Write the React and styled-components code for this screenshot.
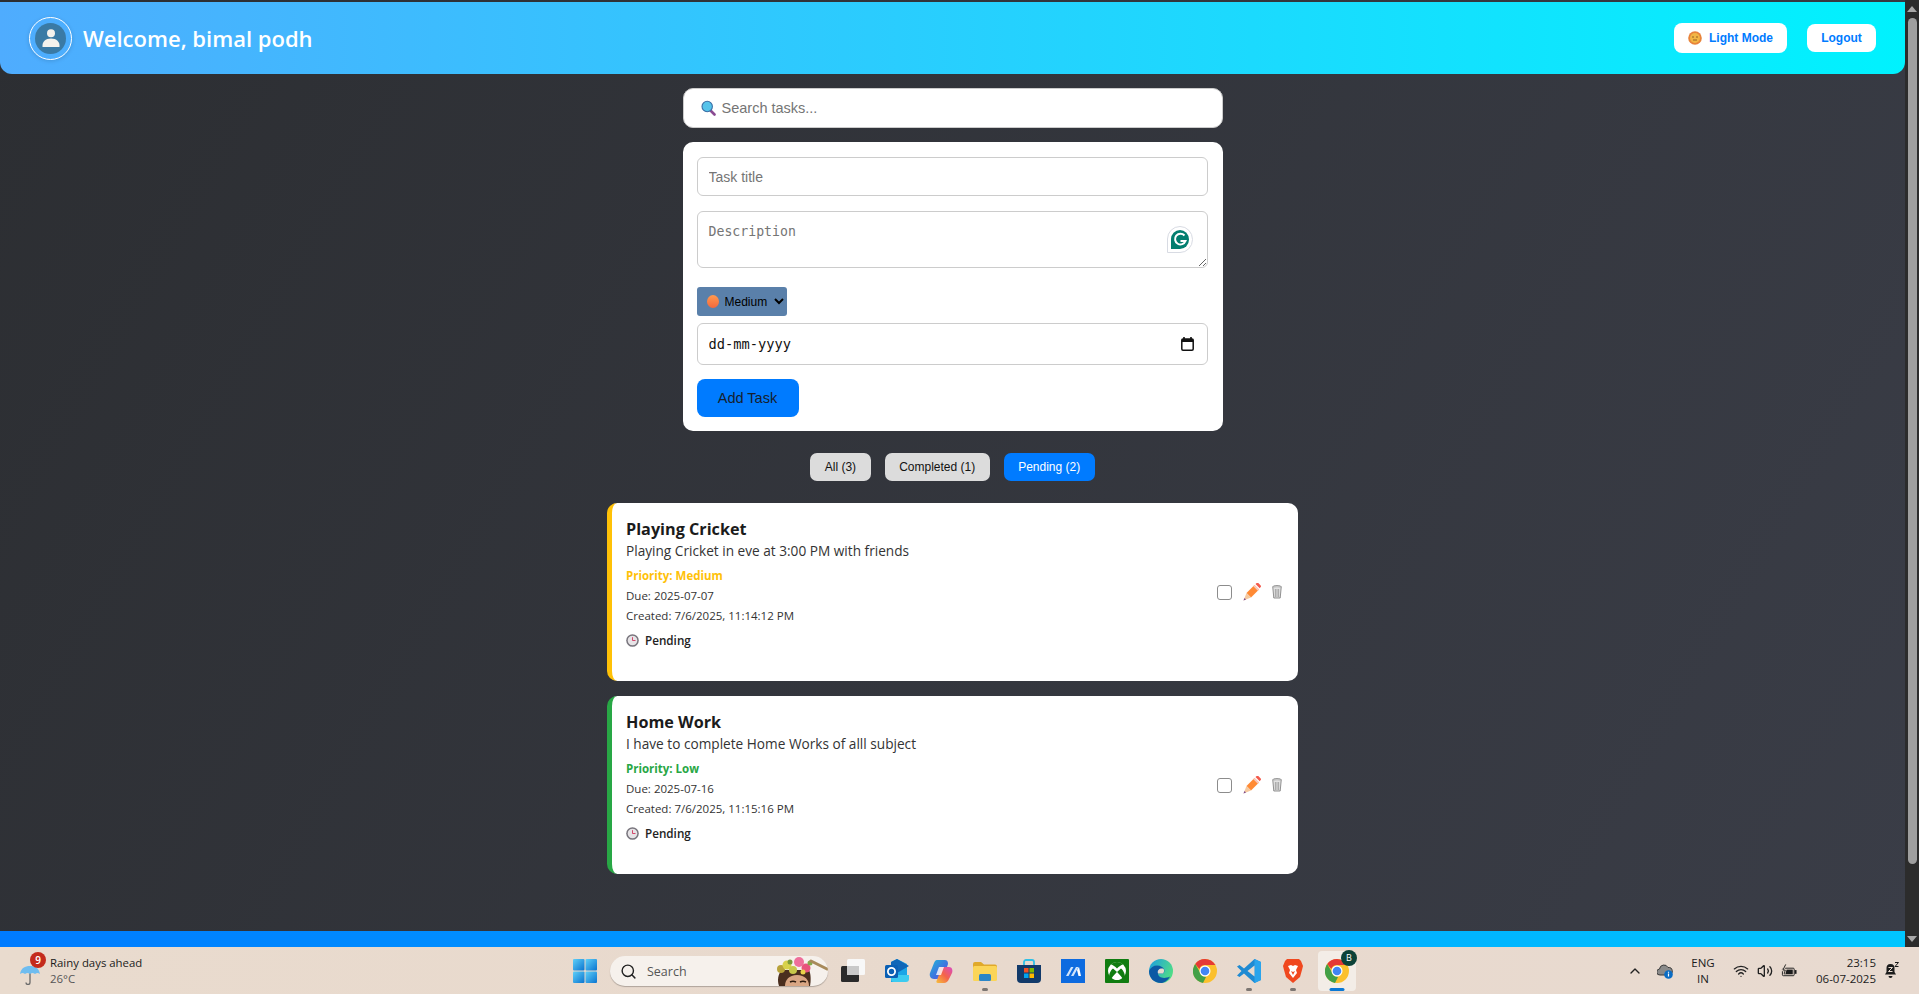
import React from "react";
import styled, { createGlobalStyle } from "styled-components";
import { ChevronUp, Search as SearchGlyph, Wifi, Volume2 } from "lucide-react";

const GlobalStyle = createGlobalStyle`
  html, body { margin: 0; padding: 0; height: 100%; overflow: hidden; }
  * { box-sizing: border-box; }
  body { font-family: "Liberation Sans", Arial, sans-serif; }
`;

const Screen = styled.div`
  display: flex;
  flex-direction: column;
  height: 100vh;
`;

const Viewport = styled.div`
  flex: 1;
  min-height: 0;
  display: flex;
`;

const Page = styled.div`
  flex: 1;
  min-width: 0;
  display: flex;
  flex-direction: column;
  padding-top: 2px;
  background: linear-gradient(120deg, #2c2e32 0%, #3a3d47 100%);
`;

const Header = styled.header`
  height: 72px;
  flex: none;
  display: flex;
  align-items: center;
  justify-content: space-between;
  padding: 0 29px;
  border-radius: 0 0 12px 12px;
  background: linear-gradient(90deg, #4facfe 0%, #00f2fe 100%);
`;

const UserBlock = styled.div`
  display: flex;
  align-items: center;
  gap: 11px;
`;

const Avatar = styled.div`
  width: 43px;
  height: 43px;
  border-radius: 50%;
  border: 1.5px solid #fff;
  display: flex;
  align-items: center;
  justify-content: center;
  box-shadow: 0 1px 4px rgba(0, 0, 0, 0.15);
`;

const AvatarInner = styled.div`
  width: 31px;
  height: 31px;
  border-radius: 50%;
  background: #3a7aa5;
  display: flex;
  align-items: center;
  justify-content: center;
`;

const Welcome = styled.h1`
  margin: 0;
  font-family: "Open Sans", sans-serif;
  font-size: 22px;
  font-weight: 600;
  color: #fff;
`;

const HeaderActions = styled.div`
  display: flex;
  align-items: center;
  gap: 20px;
`;

const HeaderButton = styled.button`
  display: flex;
  align-items: center;
  justify-content: center;
  gap: 7px;
  width: ${(p) => p.$w}px;
  height: ${(p) => p.$h}px;
  border: none;
  border-radius: 8px;
  background: #fff;
  color: #007bff;
  font-family: "Liberation Sans", sans-serif;
  font-size: 12px;
  font-weight: 700;
`;

const Main = styled.main`
  flex: 1;
  min-height: 0;
  display: flex;
  flex-direction: column;
  align-items: center;
  padding-top: 14px;
`;

const SearchBox = styled.label`
  width: 540px;
  height: 40px;
  flex: none;
  display: flex;
  align-items: center;
  gap: 6px;
  padding: 0 17px;
  background: #fff;
  border: 1px solid #ccc;
  border-radius: 10px;
`;

const SearchInput = styled.input`
  flex: 1;
  border: none;
  outline: none;
  padding: 0;
  font-family: "Liberation Sans", sans-serif;
  font-size: 14.5px;
  &::placeholder { color: #757575; }
`;

const FormCard = styled.form`
  width: 540px;
  height: 289px;
  flex: none;
  margin-top: 14px;
  padding: 15px 15px 15px 14px;
  background: #fff;
  border-radius: 10px;
  display: flex;
  flex-direction: column;
  align-items: flex-start;
`;

const TitleInput = styled.input`
  width: 100%;
  height: 39px;
  flex: none;
  padding: 0 11px;
  border: 1px solid #ccc;
  border-radius: 6px;
  font-family: "Liberation Sans", sans-serif;
  font-size: 14px;
  &::placeholder { color: #757575; }
`;

const TextareaWrap = styled.div`
  position: relative;
  width: 100%;
  height: 57px;
  flex: none;
  margin-top: 15px;
`;

const Description = styled.textarea`
  display: block;
  width: 100%;
  height: 100%;
  padding: 12px 11px;
  border: 1px solid #ccc;
  border-radius: 6px;
  font-family: "DejaVu Sans Mono", monospace;
  font-size: 13.2px;
  line-height: 16px;
  &::placeholder { color: #757575; }
`;

const GrammarlyBadge = styled.div`
  position: absolute;
  right: 15px;
  top: 15px;
  width: 26px;
  height: 27px;
`;

const SelectWrap = styled.div`
  position: relative;
  width: 90px;
  height: 29px;
  flex: none;
  margin-top: 19px;
`;

const PrioritySelect = styled.select`
  width: 100%;
  height: 100%;
  padding: 0 0 0 24px;
  border: none;
  border-radius: 3px;
  background: #5a80aa;
  color: #000;
  font-family: "Liberation Sans", sans-serif;
  font-size: 12px;
`;

const SelectDot = styled.span`
  position: absolute;
  left: 10px;
  top: 8px;
  width: 12px;
  height: 13px;
  border-radius: 50%;
  background: linear-gradient(180deg, #ff9a50, #f4683c);
  pointer-events: none;
`;

const DateBox = styled.label`
  width: 100%;
  height: 42px;
  flex: none;
  margin-top: 7px;
  padding: 0 13px 0 11px;
  display: flex;
  align-items: center;
  border: 1px solid #ccc;
  border-radius: 6px;
  background: #fff;
`;

const DateField = styled.input`
  flex: 1;
  min-width: 0;
  border: none;
  outline: none;
  padding: 0;
  font-family: "DejaVu Sans Mono", monospace;
  font-size: 13.7px;
  &::placeholder { color: #111; opacity: 1; }
`;

const AddButton = styled.button`
  width: 102px;
  height: 38px;
  flex: none;
  margin-top: 14px;
  border: none;
  border-radius: 8px;
  background: #007bff;
  color: #16202e;
  font-family: "Liberation Sans", sans-serif;
  font-size: 14.5px;
`;

const Filters = styled.div`
  display: flex;
  gap: 14px;
  flex: none;
  margin-top: 22px;
`;

const FilterButton = styled.button`
  height: 28px;
  padding: 0 14.5px;
  border: none;
  border-radius: 7px;
  background: ${(p) => (p.$active ? "#007bff" : "#dcdcdc")};
  color: ${(p) => (p.$active ? "#fff" : "#111")};
  font-family: "Liberation Sans", sans-serif;
  font-size: 12px;
`;

const TaskList = styled.div`
  display: flex;
  flex-direction: column;
  gap: 15px;
  width: 691px;
  flex: none;
  margin-top: 22px;
`;

const TaskCard = styled.article`
  height: 178px;
  display: flex;
  align-items: center;
  justify-content: space-between;
  padding: 0 16px 0 14px;
  background: #fff;
  border-left: 5px solid ${(p) => p.$color};
  border-radius: 10px;
`;

const TaskBody = styled.div`
  display: flex;
  flex-direction: column;
  align-self: flex-start;
  padding-top: 14px;
  font-family: "Open Sans", sans-serif;
  color: #222;
`;

const TaskTitle = styled.h3`
  margin: 0;
  font-size: 16.2px;
  line-height: 24px;
  font-weight: 700;
  color: #1b1b1b;
`;

const TaskDesc = styled.p`
  margin: 0;
  font-size: 13.65px;
  line-height: 19px;
  color: #333;
`;

const TaskPriority = styled.div`
  margin-top: 8px;
  font-size: 11.5px;
  line-height: 16px;
  font-weight: 700;
  color: ${(p) => p.$color};
`;

const TaskMeta = styled.div`
  margin-top: 4px;
  font-size: 11.5px;
  line-height: 16px;
  color: #333;
`;

const TaskStatus = styled.div`
  display: flex;
  align-items: center;
  gap: 6px;
  margin-top: 8px;
  font-size: 11.7px;
  line-height: 16px;
  font-weight: 600;
  color: #222;
`;

const TaskActions = styled.div`
  display: flex;
  align-items: center;
  gap: 11px;
`;

const TaskCheck = styled.input`
  width: 15px;
  height: 15px;
  margin: 0;
  appearance: none;
  background: #fff;
  border: 1.5px solid #8c8c8c;
  border-radius: 3px;
`;

const BottomBar = styled.div`
  height: 16px;
  flex: none;
  background: linear-gradient(90deg, #007bff 0%, #00c6ff 100%);
`;

const Scrollbar = styled.div`
  width: 14px;
  flex: none;
  display: flex;
  flex-direction: column;
  align-items: center;
  justify-content: space-between;
  padding: 6px 0 5px;
  background: #2c2c2c;
`;

const ScrollThumb = styled.div`
  width: 9px;
  flex: 1;
  margin: 6px 0 72px;
  border-radius: 5px;
  background: #9f9f9f;
`;

const Taskbar = styled.footer`
  height: 47px;
  flex: none;
  display: flex;
  align-items: center;
  background: linear-gradient(90deg, #e9dbce 0%, #e8d9cd 50%, #e8dad0 100%);
  font-family: "Open Sans", sans-serif;
  color: #1c1c1c;
`;

const WeatherArea = styled.div`
  width: 563px;
  flex: none;
  display: flex;
  align-items: center;
  gap: 10px;
  padding-left: 20px;
`;

const WeatherIcon = styled.div`
  position: relative;
  width: 20px;
  height: 20px;
  margin-top: 8px;
`;

const WeatherBadge = styled.span`
  position: absolute;
  left: 10px;
  top: -13px;
  width: 16px;
  height: 16px;
  border-radius: 50%;
  background: #c42b1c;
  color: #fff;
  font-size: 10px;
  font-weight: 600;
  line-height: 16px;
  text-align: center;
`;

const WeatherText = styled.div`
  display: flex;
  flex-direction: column;
  font-size: 11.4px;
  line-height: 16px;
`;

const WeatherTemp = styled.span`
  color: #555;
`;

const CenterIcons = styled.div`
  display: flex;
  align-items: center;
`;

const TaskSearch = styled.div`
  width: 218px;
  height: 30px;
  margin: 1px 3px 0;
  padding: 0 0 0 10px;
  display: flex;
  align-items: center;
  gap: 10px;
  border-radius: 15px;
  background: #f6f1ec;
  box-shadow: 0 1px 1px rgba(0, 0, 0, 0.25);
  font-size: 12.5px;
  color: #555;
  overflow: hidden;
`;

const TaskPhoto = styled.div`
  margin-left: auto;
  width: 52px;
  height: 30px;
`;

const TaskButton = styled.div`
  position: relative;
  width: 44px;
  height: 44px;
  display: flex;
  align-items: center;
  justify-content: center;
`;

const ActiveTile = styled.div`
  position: absolute;
  left: 3px;
  top: 2px;
  width: 38px;
  height: 40px;
  border-radius: 4px;
  background: #f3ede7;
`;

const RunDot = styled.span`
  position: absolute;
  bottom: 2px;
  left: 50%;
  transform: translateX(-50%);
  width: ${(p) => (p.$active ? 15 : 6)}px;
  height: 3px;
  border-radius: 2px;
  background: ${(p) => (p.$active ? "#0a78d4" : "#7c7672")};
`;

const ProfileBadge = styled.span`
  position: absolute;
  right: 2px;
  top: 1px;
  width: 16px;
  height: 16px;
  border-radius: 50%;
  background: #0c4238;
  color: #fff;
  font-size: 9px;
  line-height: 16px;
  text-align: center;
`;

const ChromeLayer = styled.div`
  position: relative;
  display: flex;
`;

const Tray = styled.div`
  margin-left: auto;
  display: flex;
  align-items: center;
  padding-right: 20px;
`;

const TrayIcon = styled.div`
  width: ${(p) => p.$w || 16}px;
  height: 16px;
  margin-left: ${(p) => p.$gap || 0}px;
  display: flex;
  align-items: center;
  justify-content: center;
`;

const TrayText = styled.div`
  display: flex;
  flex-direction: column;
  align-items: ${(p) => p.$align};
  width: ${(p) => p.$w}px;
  margin-left: ${(p) => p.$gap}px;
  font-size: 11.5px;
  line-height: 16px;
  white-space: nowrap;
`;

const SunIcon = () => (
  <svg width="14" height="14" viewBox="0 0 14 14">
    <circle cx="7" cy="7" r="6.8" fill="#e8833a" />
    <circle cx="7" cy="7" r="5" fill="#f2b544" />
    <path d="M4 6h2M8 6h2" stroke="#8a5a20" strokeWidth="0.9" />
    <path d="M5 9h4" stroke="#8a5a20" strokeWidth="0.9" />
  </svg>
);

const PersonIcon = () => (
  <svg width="20" height="20" viewBox="0 0 20 20">
    <circle cx="10" cy="5.2" r="4" fill="#f4f1ec" />
    <path d="M1.5 19c-.5-5.5 3-8.5 8.5-8.5s9 3 8.5 8.5z" fill="#f4f1ec" />
  </svg>
);

const MagnifierIcon = () => (
  <svg width="15" height="16" viewBox="0 0 15 16">
    <path d="M9.5 10.5l4 4" stroke="#8a4a92" strokeWidth="2.6" strokeLinecap="round" />
    <circle cx="6.2" cy="6.5" r="5.2" fill="#55c3ea" stroke="#3a6ea5" strokeWidth="1.1" />
  </svg>
);

const GrammarlyIcon = () => (
  <svg width="26" height="27" viewBox="0 0 26 27">
    <path d="M13 .5a12.5 13 0 0 1 0 26H.5V13A12.5 12.5 0 0 1 13 .5z" fill="#fff" stroke="#d8dbe3" />
    <path d="M13 4a9 9.5 0 0 1 0 19H4V13a9 9 0 0 1 9-9z" fill="#027e6f" />
    <path d="M17.5 9.5a5.4 5.4 0 1 0 1 5.5h-5" fill="none" stroke="#fff" strokeWidth="2" />
  </svg>
);

const CalendarIcon = () => (
  <svg width="13" height="14" viewBox="0 0 13 14">
    <path d="M3 0v2M10 0v2" stroke="#111" strokeWidth="1.6" />
    <rect x="0.8" y="2" width="11.4" height="11.2" rx="1.2" fill="none" stroke="#111" strokeWidth="1.5" />
    <rect x="0.8" y="2" width="11.4" height="3" fill="#111" />
  </svg>
);

const ClockIcon = () => (
  <svg width="13" height="13" viewBox="0 0 13 13">
    <circle cx="6.5" cy="6.5" r="6.3" fill="#77747c" />
    <circle cx="6.5" cy="6.5" r="4.8" fill="#e6e3e6" />
    <path d="M6.5 3.2v3.3h3" stroke="#d0355c" strokeWidth="0.9" fill="none" />
  </svg>
);

const PencilIcon = () => (
  <svg width="18" height="18" viewBox="0 0 18 18">
    <path d="M3.5 10l8-8 4.5 4.5-8 8z" fill="#ff8a34" />
    <path d="M12.5 1l1.2-1a1.2 1.2 0 0 1 1.6 0l2.4 2.400a1.200 1.200 0 0 1 0 1.600l-1 1.200z" fill="#f45a4c" />
    <path d="M11.500 2l4.500 4.500-1.200 1.200-4.500-4.500z" fill="#f7c9c2" />
    <path d="M3.500 10L8 14.500 .5 17.500z" fill="#f5c9a0" />
    <path d="M1.500 15L.5 17.500 3 16.500z" fill="#7a4a8a" />
  </svg>
);

const TrashIcon = () => (
  <svg width="10" height="14" viewBox="0 0 10 14">
    <ellipse cx="5" cy="2" rx="4.5" ry="1.5" fill="#c9c9c9" stroke="#777" strokeWidth="0.7" />
    <path d="M.8 2.500L1.800 13h6.400l1-10.500" fill="#e2e2e2" stroke="#777" strokeWidth="0.8" />
    <path d="M3.400 4v8M5 4v8M6.600 4v8" stroke="#8c8c8c" strokeWidth="0.7" />
  </svg>
);

const UmbrellaIcon = () => (
  <svg width="20" height="20" viewBox="0 0 20 20">
    <path d="M10 8v9.500a2 2 0 0 1-4 0" fill="none" stroke="#6a6a6a" strokeWidth="1.3" />
    <path d="M0 9C1 3 5 1 10 1s9 2 10 8c-2-1.500-3-1.500-5 0-2-1.500-3-1.500-5 0-2-1.500-3-1.500-5 0-2-1.500-3-1.500-5 0z" fill="#6fbdf0" />
  </svg>
);

const WindowsIcon = () => (
  <svg width="24" height="24" viewBox="0 0 24 24">
    <defs>
      <linearGradient id="winBlue" x1="0" y1="0" x2="1" y2="1">
        <stop offset="0" stopColor="#5fd0f8" />
        <stop offset="1" stopColor="#0a74d0" />
      </linearGradient>
    </defs>
    <rect x="0" y="0" width="11.5" height="11.5" rx="1" fill="url(#winBlue)" />
    <rect x="12.5" y="0" width="11.5" height="11.5" rx="1" fill="url(#winBlue)" />
    <rect x="0" y="12.5" width="11.5" height="11.5" rx="1" fill="url(#winBlue)" />
    <rect x="12.5" y="12.5" width="11.5" height="11.5" rx="1" fill="url(#winBlue)" />
  </svg>
);

const TaskViewIcon = () => (
  <svg width="24" height="24" viewBox="0 0 24 24">
    <rect x="0" y="7" width="18" height="16" rx="1.5" fill="#2a2a2a" />
    <rect x="6" y="0" width="18" height="16" rx="1.5" fill="#f8f8f8" />
    <rect x="6" y="7" width="12" height="9" fill="#c9c9c9" />
  </svg>
);

const OutlookIcon = () => (
  <svg width="24" height="24" viewBox="0 0 24 24">
    <path d="M6 3l6-3 10 5v14a4 4 0 0 1-4 4H6z" fill="#1aa5e6" />
    <path d="M12 0l12 7-12 7-6-4V3z" fill="#0f66b8" />
    <path d="M6 16h18v4a3 3 0 0 1-3 3H9a3 3 0 0 1-3-3z" fill="#3ccbf0" />
    <rect x="0" y="6" width="13" height="13" rx="1.5" fill="#0a5fb4" />
    <circle cx="6.5" cy="12.5" r="3.6" fill="none" stroke="#fff" strokeWidth="1.8" />
  </svg>
);

const CopilotIcon = () => (
  <svg width="24" height="24" viewBox="0 0 24 24">
    <defs>
      <linearGradient id="copA" x1="0" y1="0" x2="1" y2="1">
        <stop offset="0" stopColor="#1fb5d8" />
        <stop offset="0.6" stopColor="#3f6fe0" />
        <stop offset="1" stopColor="#9a5be0" />
      </linearGradient>
      <linearGradient id="copB" x1="0" y1="1" x2="1" y2="0">
        <stop offset="0" stopColor="#f7c03a" />
        <stop offset="0.5" stopColor="#f4634a" />
        <stop offset="1" stopColor="#d84bc4" />
      </linearGradient>
    </defs>
    <path d="M8 1h8c3 0 3 3 3 4l-4 12c-1 2-2 3-5 3H5c-3 0-5-3-4-6L5 4c.5-1.500 1.500-3 3-3z" fill="url(#copA)" />
    <path d="M11 8h9c3 0 4 3 3 6l-3 6c-1 2.500-3 4-5 4H9c-2 0-2-2-1-3l3-8z" fill="url(#copB)" />
    <path d="M10 8h5l-3 8H7z" fill="#fff" opacity="0.8" />
  </svg>
);

const FolderIcon = () => (
  <svg width="24" height="24" viewBox="0 0 24 24">
    <path d="M0 5a2 2 0 0 1 2-2h6l3 2.500h11a2 2 0 0 1 2 2V21H0z" fill="#e0a92a" />
    <rect x="0" y="7" width="24" height="15" rx="1.5" fill="#fbd558" />
    <rect x="6" y="15" width="12" height="7" rx="1.5" fill="#2b86c8" />
  </svg>
);

const StoreIcon = () => (
  <svg width="24" height="24" viewBox="0 0 24 24">
    <path d="M7 6V3a2 2 0 0 1 2-2h6a2 2 0 0 1 2 2v3" fill="none" stroke="#2fc0e6" strokeWidth="1.8" />
    <path d="M0 6h24v14a4 4 0 0 1-4 4H4a4 4 0 0 1-4-4z" fill="#123a6a" />
    <rect x="7" y="9" width="4.5" height="4.5" fill="#f25022" />
    <rect x="12.5" y="9" width="4.5" height="4.5" fill="#7fba00" />
    <rect x="7" y="14.5" width="4.5" height="4.5" fill="#00a4ef" />
    <rect x="12.5" y="14.5" width="4.5" height="4.5" fill="#ffb900" />
  </svg>
);

const SlashAppIcon = () => (
  <svg width="24" height="24" viewBox="0 0 24 24">
    <rect width="24" height="24" fill="#0d6be0" />
    <path d="M5 17l5-9h2.500l-5 9zM10 17l5-9h2.500l-5 9z" fill="#cfe3fb" />
    <path d="M16 11l2-3 2 9h-2.500z" fill="#fff" />
  </svg>
);

const XboxIcon = () => (
  <svg width="24" height="24" viewBox="0 0 24 24">
    <rect width="24" height="24" rx="1" fill="#107c10" />
    <circle cx="12" cy="12" r="9" fill="#fff" />
    <path d="M12 9.500C10 7.500 8 6 6 5.500 7.500 3.800 9.500 3 12 3s4.500.8 6 2.500c-2 .5-4 2-6 4z" fill="#107c10" />
    <path d="M12 13c-3 3-5 5.500-6 7l-1.500-1.500c-1-3 1-7 3.500-9zM12 13c3 3 5 5.500 6 7l1.500-1.500c1-3-1-7-3.500-9z" fill="#107c10" />
    <path d="M12 13.500c-2.500 2.500-4 4.500-4.500 6 1.300.9 2.800 1.500 4.500 1.500s3.200-.6 4.500-1.500c-.5-1.500-2-3.500-4.500-6z" fill="#fff" />
  </svg>
);

const EdgeIcon = () => (
  <svg width="24" height="24" viewBox="0 0 24 24">
    <defs>
      <linearGradient id="edgeA" x1="0" y1="0" x2="1" y2="0.5">
        <stop offset="0" stopColor="#1b9de2" />
        <stop offset="1" stopColor="#4fdc88" />
      </linearGradient>
    </defs>
    <circle cx="12" cy="12" r="12" fill="url(#edgeA)" />
    <path d="M0 12C2 7 8 5 13 8c3 2 3 5 1 6.500H9c0 4 6 6 12 3-2 4-6 6.500-9 6.500-7 0-12-5-12-12z" fill="#0c59a4" />
    <path d="M9 14.500c-1-3 1-5 4-5 2 0 3 2 1 5z" fill="#e8dace" />
  </svg>
);

const ChromeIcon = () => (
  <svg width="24" height="24" viewBox="0 0 24 24">
    <circle cx="12" cy="12" r="12" fill="#fbc02d" />
    <path d="M12 0a12 12 0 0 1 10.400 6H12a6 6 0 0 0-5.700 4L2.200 5A12 12 0 0 1 12 0z" fill="#e53935" />
    <path d="M2.200 5l4.900 8.500a6 6 0 0 0 5.900 4.400L10 24A12 12 0 0 1 2.200 5z" fill="#43a047" />
    <circle cx="12" cy="12" r="5.5" fill="#fff" />
    <circle cx="12" cy="12" r="4.3" fill="#4285f4" />
  </svg>
);

const VsCodeIcon = () => (
  <svg width="24" height="24" viewBox="0 0 24 24">
    <path d="M17.500 0L24 3v18l-6.500 3L7 14.500 2.500 18 0 16.500 4.500 12 0 7.500 2.500 6 7 9.500z" fill="#1f8ad2" />
    <path d="M17.500 0L24 3v18l-6.500 3z" fill="#2aa4ec" />
    <path d="M17.500 6.500L10.500 12l7 5.500z" fill="#e8dace" />
  </svg>
);

const BraveIcon = () => (
  <svg width="20" height="24" viewBox="0 0 20 24">
    <path d="M4 0h12l2 2 2 5-1 4-2 7-7 6-7-6-2-7-1-4 2-5z" fill="#f0481f" />
    <path d="M5 7l3-1 2 1 2-1 3 1-2 4 1 3-4 5-4-5 1-3z" fill="#fff" />
    <path d="M8 12l2 1 2-1-2 4z" fill="#f0481f" />
  </svg>
);

const FlowerPhoto = () => (
  <svg width="52" height="30" viewBox="0 0 52 30">
    <path d="M3 30c-2-6-1-12 3-16h27c2 4 2 11 1 16z" fill="#4a2e1e" />
    <path d="M9 30c0-6 4-11 12-11s12 5 12 11z" fill="#d9a684" />
    <path d="M14 26c2-1 4-1 6 0M24 26c2-1 4-1 6 0" stroke="#2e1c10" strokeWidth="1.5" fill="none" />
    <circle cx="5" cy="13" r="4" fill="#b8a23a" />
    <circle cx="11" cy="9" r="4.5" fill="#d8d24a" />
    <circle cx="17" cy="14" r="4" fill="#c8c84a" />
    <circle cx="23" cy="6" r="5" fill="#ee6f9a" />
    <circle cx="30" cy="12" r="4.5" fill="#e8527c" />
    <circle cx="14" cy="6" r="2.5" fill="#7a9a3a" />
    <circle cx="27" cy="16" r="2.5" fill="#e9d24a" />
    <circle cx="34" cy="7" r="2.5" fill="#84a84a" />
    <path d="M35 5l16 8" stroke="#a88a5a" strokeWidth="3" strokeLinecap="round" />
  </svg>
);

const CloudInfoIcon = () => (
  <svg width="16" height="16" viewBox="0 0 16 16">
    <path d="M3 12a3 3 0 0 1-.5-6A4.500 4.500 0 0 1 11 4.500 3.500 3.500 0 0 1 12 12z" fill="#8a8a8a" stroke="#3a3a3a" />
    <circle cx="11.5" cy="11.5" r="4.3" fill="#0a6cc4" />
    <path d="M11.500 10.500v3M11.500 8.800v.9" stroke="#fff" strokeWidth="1.2" />
  </svg>
);

const BatteryIcon = () => (
  <svg width="17" height="14" viewBox="0 0 17 14">
    <rect x="1.5" y="4" width="12.5" height="8" rx="1" fill="none" stroke="#1c1c1c" />
    <rect x="3" y="5.5" width="9.5" height="5" fill="#1c1c1c" />
    <rect x="14.5" y="6" width="2" height="4" fill="#1c1c1c" />
    <path d="M5 0L2 6h2.500L3.500 10" fill="none" stroke="#e8dace" strokeWidth="2.5" />
    <path d="M5 0L2 6h2.500L3.500 10" fill="none" stroke="#1c1c1c" strokeWidth="1" />
  </svg>
);

const BellSleepIcon = () => (
  <svg width="14" height="17" viewBox="0 0 14 17">
    <path d="M5.500 2C2.500 2 1.500 4 1.500 6v4L0 12.500h11L9.500 10V6c0-2-1-4-4-4z" fill="#1c1c1c" />
    <path d="M3.500 14h4a2 2 0 0 1-4 0z" fill="#1c1c1c" />
    <path d="M3.500 5.500h4l-4 4h4" fill="none" stroke="#e8dace" strokeWidth="1" />
    <path d="M10 .5h3.500L10 4.500h3.500" fill="none" stroke="#1c1c1c" strokeWidth="1" />
  </svg>
);

const tasks = [
  {
    title: "Playing Cricket",
    desc: "Playing Cricket in eve at 3:00 PM with friends",
    priority: "Medium",
    color: "#ffc107",
    due: "2025-07-07",
    created: "7/6/2025, 11:14:12 PM",
  },
  {
    title: "Home Work",
    desc: "I have to complete Home Works of alll subject",
    priority: "Low",
    color: "#28a745",
    due: "2025-07-16",
    created: "7/6/2025, 11:15:16 PM",
  },
];

const taskApps = [
  { id: "view", icon: <TaskViewIcon /> },
  { id: "outlook", icon: <OutlookIcon /> },
  { id: "copilot", icon: <CopilotIcon /> },
  { id: "folder", icon: <FolderIcon />, running: true },
  { id: "store", icon: <StoreIcon /> },
  { id: "slash", icon: <SlashAppIcon /> },
  { id: "xbox", icon: <XboxIcon /> },
  { id: "edge", icon: <EdgeIcon /> },
  { id: "chrome", icon: <ChromeIcon /> },
  { id: "code", icon: <VsCodeIcon />, running: true },
  { id: "brave", icon: <BraveIcon />, running: true },
];

const Arrow = ({ up }) => (
  <svg width="10" height="6" viewBox="0 0 10 6">
    <path d={up ? "M5 0l5 6H0z" : "M5 6L0 0h10z"} fill="#a8a8a8" />
  </svg>
);

const App = () => {
  return (
    <Screen>
      <GlobalStyle />
      <Viewport>
        <Page>
          <Header>
            <UserBlock>
              <Avatar>
                <AvatarInner>
                  <PersonIcon />
                </AvatarInner>
              </Avatar>
              <Welcome>Welcome, bimal podh</Welcome>
            </UserBlock>
            <HeaderActions>
              <HeaderButton $w={113} $h={30}>
                <SunIcon />
                Light Mode
              </HeaderButton>
              <HeaderButton $w={69} $h={28}>
                Logout
              </HeaderButton>
            </HeaderActions>
          </Header>

          <Main>
            <SearchBox>
              <MagnifierIcon />
              <SearchInput placeholder="Search tasks..." />
            </SearchBox>

            <FormCard>
              <TitleInput placeholder="Task title" />
              <TextareaWrap>
                <Description placeholder="Description" />
                <GrammarlyBadge>
                  <GrammarlyIcon />
                </GrammarlyBadge>
              </TextareaWrap>
              <SelectWrap>
                <PrioritySelect defaultValue="Medium">
                  <option>High</option>
                  <option>Medium</option>
                  <option>Low</option>
                </PrioritySelect>
                <SelectDot />
              </SelectWrap>
              <DateBox>
                <DateField placeholder="dd-mm-yyyy" />
                <CalendarIcon />
              </DateBox>
              <AddButton type="button">Add Task</AddButton>
            </FormCard>

            <Filters>
              <FilterButton>All (3)</FilterButton>
              <FilterButton>Completed (1)</FilterButton>
              <FilterButton $active>Pending (2)</FilterButton>
            </Filters>

            <TaskList>
              {tasks.map((t) => (
                <TaskCard key={t.title} $color={t.color}>
                  <TaskBody>
                    <TaskTitle>{t.title}</TaskTitle>
                    <TaskDesc>{t.desc}</TaskDesc>
                    <TaskPriority $color={t.color}>Priority: {t.priority}</TaskPriority>
                    <TaskMeta>Due: {t.due}</TaskMeta>
                    <TaskMeta>Created: {t.created}</TaskMeta>
                    <TaskStatus>
                      <ClockIcon />
                      Pending
                    </TaskStatus>
                  </TaskBody>
                  <TaskActions>
                    <TaskCheck type="checkbox" />
                    <PencilIcon />
                    <TrashIcon />
                  </TaskActions>
                </TaskCard>
              ))}
            </TaskList>
          </Main>

          <BottomBar />
        </Page>
        <Scrollbar>
          <Arrow up />
          <ScrollThumb />
          <Arrow />
        </Scrollbar>
      </Viewport>

      <Taskbar>
        <WeatherArea>
          <WeatherIcon>
            <UmbrellaIcon />
            <WeatherBadge>9</WeatherBadge>
          </WeatherIcon>
          <WeatherText>
            <span>Rainy days ahead</span>
            <WeatherTemp>26°C</WeatherTemp>
          </WeatherText>
        </WeatherArea>

        <CenterIcons>
          <TaskButton>
            <WindowsIcon />
          </TaskButton>
          <TaskSearch>
            <SearchGlyph size={17} color="#222" />
            Search
            <TaskPhoto>
              <FlowerPhoto />
            </TaskPhoto>
          </TaskSearch>
          {taskApps.map((a) => (
            <TaskButton key={a.id}>
              {a.icon}
              {a.running && <RunDot />}
            </TaskButton>
          ))}
          <TaskButton>
            <ActiveTile />
            <ChromeLayer>
              <ChromeIcon />
            </ChromeLayer>
            <ProfileBadge>B</ProfileBadge>
            <RunDot $active />
          </TaskButton>
        </CenterIcons>

        <Tray>
          <TrayIcon>
            <ChevronUp size={16} color="#222" />
          </TrayIcon>
          <TrayIcon $gap={14}>
            <CloudInfoIcon />
          </TrayIcon>
          <TrayText $w={40} $gap={10} $align="center">
            <span>ENG</span>
            <span>IN</span>
          </TrayText>
          <TrayIcon $gap={10}>
            <Wifi size={16} color="#222" />
          </TrayIcon>
          <TrayIcon $gap={8}>
            <Volume2 size={16} color="#222" />
          </TrayIcon>
          <TrayIcon $gap={8}>
            <BatteryIcon />
          </TrayIcon>
          <TrayText $w={70} $gap={9} $align="flex-end">
            <span>23:15</span>
            <span>06-07-2025</span>
          </TrayText>
          <TrayIcon $gap={9} $w={14}>
            <BellSleepIcon />
          </TrayIcon>
        </Tray>
      </Taskbar>
    </Screen>
  );
};

export default App;
